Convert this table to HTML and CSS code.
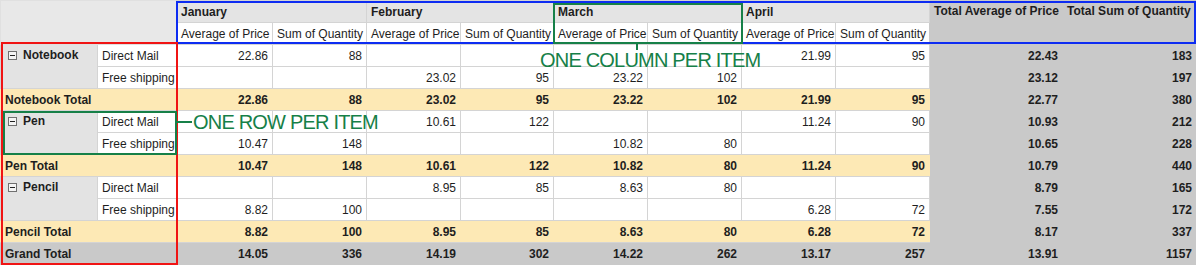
FILE: index.html
```html
<!DOCTYPE html>
<html lang="en">
<head>
    <meta charset="UTF-8">
    <title>Pivot Grid - Sales by Item</title>
    <link rel="stylesheet" href="styles.css">
</head>
<body>
    <div class="pivot">
        <table class="grid">
            <colgroup>
                <col class="c-item">
                <col class="c-ship">
                <col class="c-96"><col class="c-94">
                <col class="c-94"><col class="c-93">
                <col class="c-94"><col class="c-94">
                <col class="c-94"><col class="c-94">
                <col class="c-tavg"><col class="c-tsum">
            </colgroup>
            <thead>
                <tr class="months">
                    <th class="corner" colspan="2" rowspan="2"></th>
                    <th colspan="2">January</th>
                    <th colspan="2">February</th>
                    <th colspan="2">March</th>
                    <th colspan="2">April</th>
                    <th class="grand-head" rowspan="2">Total Average of Price</th>
                    <th class="grand-head" rowspan="2">Total Sum of Quantity</th>
                </tr>
                <tr class="measures">
                    <th>Average of Price</th><th>Sum of Quantity</th>
                    <th>Average of Price</th><th>Sum of Quantity</th>
                    <th>Average of Price</th><th>Sum of Quantity</th>
                    <th>Average of Price</th><th>Sum of Quantity</th>
                </tr>
            </thead>
            <tbody>
                <!-- Notebook -->
                <tr>
                    <th class="item" rowspan="2"><span class="toggle"></span>Notebook</th>
                    <td class="ship">Direct Mail</td>
                    <td>22.86</td><td>88</td><td></td><td></td><td></td><td></td><td>21.99</td><td>95</td>
                    <td class="grand">22.43</td><td class="grand">183</td>
                </tr>
                <tr>
                    <td class="ship">Free shipping</td>
                    <td></td><td></td><td>23.02</td><td>95</td><td>23.22</td><td>102</td><td></td><td></td>
                    <td class="grand">23.12</td><td class="grand">197</td>
                </tr>
                <tr class="subtotal">
                    <th colspan="2">Notebook Total</th>
                    <td>22.86</td><td>88</td><td>23.02</td><td>95</td><td>23.22</td><td>102</td><td>21.99</td><td>95</td>
                    <td class="grand">22.77</td><td class="grand">380</td>
                </tr>
                <!-- Pen -->
                <tr>
                    <th class="item" rowspan="2"><span class="toggle"></span>Pen</th>
                    <td class="ship">Direct Mail</td>
                    <td></td><td></td><td>10.61</td><td>122</td><td></td><td></td><td>11.24</td><td>90</td>
                    <td class="grand">10.93</td><td class="grand">212</td>
                </tr>
                <tr>
                    <td class="ship">Free shipping</td>
                    <td>10.47</td><td>148</td><td></td><td></td><td>10.82</td><td>80</td><td></td><td></td>
                    <td class="grand">10.65</td><td class="grand">228</td>
                </tr>
                <tr class="subtotal">
                    <th colspan="2">Pen Total</th>
                    <td>10.47</td><td>148</td><td>10.61</td><td>122</td><td>10.82</td><td>80</td><td>11.24</td><td>90</td>
                    <td class="grand">10.79</td><td class="grand">440</td>
                </tr>
                <!-- Pencil -->
                <tr>
                    <th class="item" rowspan="2"><span class="toggle"></span>Pencil</th>
                    <td class="ship">Direct Mail</td>
                    <td></td><td></td><td>8.95</td><td>85</td><td>8.63</td><td>80</td><td></td><td></td>
                    <td class="grand">8.79</td><td class="grand">165</td>
                </tr>
                <tr>
                    <td class="ship">Free shipping</td>
                    <td>8.82</td><td>100</td><td></td><td></td><td></td><td></td><td>6.28</td><td>72</td>
                    <td class="grand">7.55</td><td class="grand">172</td>
                </tr>
                <tr class="subtotal">
                    <th colspan="2">Pencil Total</th>
                    <td>8.82</td><td>100</td><td>8.95</td><td>85</td><td>8.63</td><td>80</td><td>6.28</td><td>72</td>
                    <td class="grand">8.17</td><td class="grand">337</td>
                </tr>
                <tr class="grand-total">
                    <th colspan="2">Grand Total</th>
                    <td>14.05</td><td>336</td><td>14.19</td><td>302</td><td>14.22</td><td>262</td><td>13.17</td><td>257</td>
                    <td>13.91</td><td>1157</td>
                </tr>
            </tbody>
        </table>

        <!-- annotations -->
        <div class="mark mark-columns"></div>
        <div class="mark mark-rows"></div>
        <div class="mark mark-month"></div>
        <div class="mark mark-item"></div>
        <div class="tick"></div>
        <div class="note note-column">ONE COLUMN PER ITEM</div>
        <div class="note note-row"><span class="dash"></span>ONE ROW PER ITEM</div>
    </div>
</body>
</html>
```

FILE: styles.css
```css
* {
    margin: 0;
    padding: 0;
    box-sizing: border-box;
}

body {
    font-family: 'Liberation Sans', Arial, sans-serif;
    font-size: 12px;
    color: #1e1e1e;
    background: white;
}

.pivot {
    position: relative;
    width: 1196px;
    height: 265px;
    overflow: hidden;
}

.grid {
    border-collapse: collapse;
    table-layout: fixed;
    width: 1196px;
}

.c-item { width: 97px; }
.c-ship { width: 79px; }
.c-96 { width: 96px; }
.c-94 { width: 94px; }
.c-93 { width: 93px; }
.c-tavg { width: 133px; }
.c-tsum { width: 134px; }

.grid tr {
    height: 22px;
}

.grid th,
.grid td {
    border: 1px solid #d4d4d4;
    padding: 0 4px;
    white-space: nowrap;
    overflow: hidden;
    line-height: 20px;
}

.grid td {
    text-align: right;
    background: white;
}

/* header rows */
.grid thead th {
    text-align: left;
    font-weight: normal;
}

.months th {
    background: #e4e4e4;
    font-weight: bold !important;
}

.measures th {
    background: white;
}

.grid .corner {
    background: #e8e8e8;
    border-color: #e0e0e0;
    border-right-color: #d4d4d4;
}

.grid .grand-head {
    background: #c9c9c9;
    border-color: #c9c9c9;
    vertical-align: top;
}

/* row headers */
.grid .item {
    background: #e3e3e3;
    text-align: left;
    vertical-align: top;
    padding-left: 7px;
}

.toggle {
    display: inline-block;
    position: relative;
    width: 9px;
    height: 9px;
    border: 1px solid #707070;
    background: #f4f4f4;
    margin-right: 6px;
    vertical-align: -1px;
}

.toggle::after {
    content: "";
    position: absolute;
    left: 1px;
    top: 3px;
    width: 5px;
    height: 1px;
    background: #222;
}

.grid td.ship {
    text-align: left;
}

.grid td.grand {
    background: #c9c9c9;
    border-color: #c9c9c9;
    font-weight: bold;
}

.subtotal th,
.subtotal td {
    background: #fde9b5 !important;
    border-left-color: #fde9b5;
    border-right-color: #fde9b5;
    font-weight: bold;
    text-align: left;
}

.subtotal td {
    text-align: right;
}

.subtotal td.grand {
    background: #c9c9c9 !important;
    border-color: #c9c9c9;
}

.grand-total th,
.grand-total td {
    background: #c9c9c9;
    border-color: #c9c9c9;
    font-weight: bold;
    text-align: left;
}

.grand-total td {
    text-align: right;
}

/* annotation overlays */
.mark {
    position: absolute;
    border: 2px solid;
    pointer-events: none;
}

.mark-columns {
    left: 176px;
    top: 1px;
    width: 1020px;
    height: 43px;
    border-color: #0d2cf2;
}

.mark-rows {
    left: 1px;
    top: 42px;
    width: 177px;
    height: 223px;
    border-color: #f01414;
}

.mark-month {
    left: 553px;
    top: 3px;
    width: 190px;
    height: 41px;
    border-color: #168048;
}

.mark-item {
    left: 3px;
    top: 111px;
    width: 174px;
    height: 44px;
    border-color: #168048;
}

.tick {
    position: absolute;
    left: 636px;
    top: 43px;
    width: 2px;
    height: 7px;
    background: #168048;
}

.note {
    position: absolute;
    color: #168048;
    font-size: 20px;
    letter-spacing: -0.8px;
    line-height: 20px;
    white-space: nowrap;
}

.note-column {
    left: 540px;
    top: 50px;
}

.note-row {
    left: 176px;
    top: 112px;
    display: flex;
    align-items: center;
}

.note-row .dash {
    display: inline-block;
    width: 16px;
    height: 2px;
    background: #168048;
    margin-right: 1px;
}
```
